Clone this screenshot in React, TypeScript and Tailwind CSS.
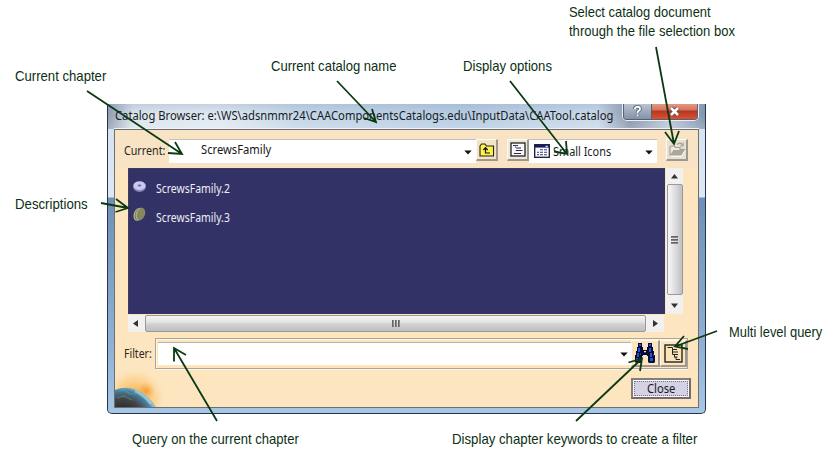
import { useLayoutEffect, useRef, useState } from "react";
import type { ReactNode } from "react";

/* A single line of text squeezed or stretched to an exact width. */
function FitText({ width, className = "", children }: { width: number; className?: string; children: ReactNode }) {
  const ref = useRef<HTMLSpanElement>(null);
  const [scale, setScale] = useState(1);
  useLayoutEffect(() => {
    if (ref.current) setScale(width / ref.current.offsetWidth);
  }, [width]);
  return (
    <span className="flex h-4 shrink-0 items-start overflow-visible" style={{ width }}>
      <span ref={ref} className={"block shrink-0 origin-left whitespace-nowrap " + className} style={{ transform: `scaleX(${scale})` }}>
        {children}
      </span>
    </span>
  );
}

const ui = "text-[12px] leading-4 [font-family:'Noto_Sans','Open_Sans',sans-serif]";

function Label({ place, width, children }: { place: string; width: number; children: string }) {
  return (
    <div className={"absolute " + place}>
      <FitText width={width} className="text-[14.3px] leading-4 text-[#0b3013] [font-family:'Liberation_Sans',Arial,sans-serif]">
        {children}
      </FitText>
    </div>
  );
}

function Down({ className = "" }: { className?: string }) {
  return (
    <svg className={"shrink-0 " + className} width="8" height="5" viewBox="0 0 8 5">
      <path d="M0.3 0.5H7.7L4 4.6Z" fill="#111" />
    </svg>
  );
}

const raised = "flex shrink-0 items-center justify-center border-t border-l border-r-2 border-b-2 border-t-[#fffaf0] border-l-[#fffaf0] border-r-[#9f9890] border-b-[#9f9890]";

function FolderUp() {
  return (
    <svg width="16" height="14" viewBox="0 0 16 14" className="shrink-0">
      <path d="M1 3 2.5 1H6L7.5 3H14.5V13H1Z" fill="#fdf250" stroke="#25230c" strokeWidth="1.1" />
      <path d="M6.5 5V10H11M4.3 7 6.5 4.7 8.7 7" fill="none" stroke="#111" strokeWidth="1.2" />
    </svg>
  );
}

function TreeList() {
  return (
    <svg width="16" height="15" viewBox="0 0 16 15" className="shrink-0">
      <rect x="1" y="1" width="14" height="13" fill="#faf8fa" stroke="#222" strokeWidth="1.3" />
      <path d="M3 3.5H8M6 6H11M6 8.5H12.5M4 11.5H11" stroke="#292950" strokeWidth="1.1" />
      <path d="M5.5 3.5V6M5.5 8.5V8" stroke="#777" strokeWidth="0.8" />
    </svg>
  );
}

function SmallIcons() {
  return (
    <svg width="16" height="14" viewBox="0 0 16 14" className="shrink-0">
      <rect x="0.7" y="0.7" width="14.6" height="12.6" fill="#fff" stroke="#171932" strokeWidth="1.3" />
      <rect x="1" y="1" width="14" height="2.6" fill="#171a68" />
      <path d="M6 5.7H9M10 5.7H13M3 8.2H5M6 8.2H9M10 8.2H13M3 10.7H5M6 10.7H9M10 10.7H13" stroke="#333789" strokeWidth="1.1" />
      <path d="M11.5 2.3h2.5" stroke="#fff" strokeWidth="1" />
    </svg>
  );
}

function OpenFolder() {
  return (
    <svg width="18" height="17" viewBox="0 0 18 17" className="shrink-0">
      <path d="M2 14V6L3 5H6L7.5 6.5H12V8.5H16.5L13 14Z" fill="#eee9de" stroke="#a5a096" strokeWidth="1.2" />
      <path d="M2 14 5.5 9H16.5L13 14Z" fill="#aca79d" />
      <path d="M9 3.5Q12 0.5 14.5 4M15 1.5V5H12" fill="none" stroke="#a5a096" strokeWidth="1.2" />
      <path d="M3 15.3H13.5L17 9.5" fill="none" stroke="#fffdf5" strokeWidth="1" />
    </svg>
  );
}

function Binoculars() {
  return (
    <svg width="20" height="21" viewBox="0 0 20 21" className="shrink-0">
      <path d="M3 0H7V4H8V7H12V4H13V0H17V4H18V8H19V12H20V19L19 20H14L13 19V13H12V12H8V13H7V19L6 20H1L0 19V12H1V8H2V4H3Z" fill="#080d30" />
      <path d="M4 1H6V3H4ZM3 5H5V9H3ZM2 10H4V14H2ZM1 15H3V18H1ZM14 1H16V3H14ZM14 5H16V9H14ZM15 10H17V14H15ZM15 15H18V18H15Z" fill="#1c55df" />
      <path d="M9 8H11V10H9ZM5 10H6V12H5ZM4 15H5V18H4ZM18 11H19V13H18Z" fill="#1b45a8" />
      <path d="M9 8H11V9H9Z" fill="#fde5bd" />
    </svg>
  );
}

function MultiLevel() {
  return (
    <svg width="19" height="19" viewBox="0 0 19 19" className="shrink-0">
      <rect x="1" y="1" width="17" height="17" fill="#fbe3ba" stroke="#16150f" strokeWidth="1.3" />
      <path d="M3.5 3.5H8.5V10.5M8.5 5.5H13M8.5 8H14M8.5 10.5H14M10.5 10.5V13.5M10.5 13H13.5M12 13V15.5H16" fill="none" stroke="#28251c" strokeWidth="1" />
    </svg>
  );
}

function Planet() {
  return (
    <svg width="52" height="36" viewBox="0 0 52 36">
      <defs>
        <radialGradient id="halo" gradientUnits="userSpaceOnUse" cx="20" cy="28" r="31">
          <stop offset="0.3" stopColor="#fbb755" stopOpacity="0.9" />
          <stop offset="0.7" stopColor="#fcd08a" stopOpacity="0.6" />
          <stop offset="1" stopColor="#fde5bd" stopOpacity="0" />
        </radialGradient>
        <radialGradient id="flare" gradientUnits="userSpaceOnUse" cx="31" cy="20" r="9">
          <stop offset="0" stopColor="#f59a3d" />
          <stop offset="1" stopColor="#f9ad4d" stopOpacity="0" />
        </radialGradient>
        <radialGradient id="globe" gradientUnits="userSpaceOnUse" cx="7" cy="50" r="37">
          <stop offset="0.3" stopColor="#292623" />
          <stop offset="0.6" stopColor="#424548" />
          <stop offset="0.83" stopColor="#4681a0" />
          <stop offset="0.94" stopColor="#86c3d3" />
          <stop offset="1" stopColor="#b8bd9b" />
        </radialGradient>
      </defs>
      <rect width="52" height="36" fill="url(#halo)" />
      <rect x="20" y="8" width="24" height="24" fill="url(#flare)" />
      <path d="M0 19C14 13 31 20 41 36H0Z" fill="url(#globe)" />
      <path d="M20 20Q29 24 36 33" fill="none" stroke="#d4e3e4" strokeWidth="2.5" opacity="0.45" />
      <path d="M3 20 9 19 15 23 21 23M2 27 9 25 17 29" fill="none" stroke="#91bdc9" strokeWidth="1.2" opacity="0.3" />
    </svg>
  );
}

function ListItem({ name, width, children }: { name: string; width: number; children: ReactNode }) {
  return (
    <div className="flex h-[29px] items-center pl-1">
      <div className="flex w-[23px] shrink-0 items-start">{children}</div>
      <FitText width={width} className={ui + " text-[#eeeef6]"}>{name}</FitText>
    </div>
  );
}

function Dialog() {
  return (
    <div className="flex h-[310px] w-[599px] shrink-0 flex-col overflow-hidden rounded-b-[5px] border-b border-l border-r border-[#26354d] bg-[linear-gradient(180deg,#cbd9e8_0,#d5e2ef_10px,#dde8f3_93px,#6e8fb8_94px,#91b2d5_245px,#a8c7e6_100%)] px-[6px]">
      <div className="-mx-[6px] flex h-[25px] shrink-0 items-start justify-between bg-[linear-gradient(180deg,#8fa5c055_0,#8fa5c000_10px,#ffffff33_100%),linear-gradient(90deg,#8e9bb0_0,#dae3ec_25px,#e0e9f1_110px,#c3d5e7_190px,#b5cbe2_360px,#c8d8e9_490px,#8594a9_522px,#b9c6d7_560px,#8094ad_100%)] pl-[7px] pr-[7px]">
        <div className="pt-[4px]">
          <FitText width={498} className={ui + " text-[#171b22]"}>
            Catalog Browser: e:\WS\adsnmmr24\CAAComponentsCatalogs.edu\InputData\CAATool.catalog
          </FitText>
        </div>
        <div className="flex h-4 w-[75px] shrink-0 overflow-hidden rounded-b-[4px] border border-t-0 border-[#59616e] shadow-[0_0_0_1px_#e8eef5]">
          <div className="flex w-7 items-center justify-center border-r border-[#5e5c65] bg-linear-to-b from-[#b9c4d2] to-[#8592a8]">
            <svg width="11" height="13" viewBox="0 0 11 13">
              <path d="M3 4Q3 1.8 5.5 1.8Q8 1.8 8 4Q8 5.4 6.3 6.1Q5.5 6.5 5.5 8M5.5 9.5V11" fill="none" stroke="#53617a" strokeWidth="3.6" />
              <path d="M3 4Q3 1.8 5.5 1.8Q8 1.8 8 4Q8 5.4 6.3 6.1Q5.5 6.5 5.5 8M5.5 9.5V11" fill="none" stroke="#fff" strokeWidth="1.9" />
            </svg>
          </div>
          <div className="flex flex-1 items-center justify-center bg-[linear-gradient(180deg,#e39983_0,#d4735d_6px,#b7361f_7px,#d95232_100%)]">
            <svg width="13" height="11" viewBox="0 0 13 11">
              <path d="M3 2 10 9M10 2 3 9" stroke="#6f4547" strokeWidth="4.3" />
              <path d="M3 2 10 9M10 2 3 9" stroke="#fff" strokeWidth="2.5" />
            </svg>
          </div>
        </div>
      </div>

      <div className="flex h-[279px] w-[585px] shrink-0 flex-col border border-[#6d6e70] bg-[#fce5bf] shadow-[0_-1px_0_#edf3f9]">
        <div className="flex h-[38px] shrink-0 items-start bg-[#f8e3c4] pl-[9px] pt-[9px]">
          <div className="w-[45px] pt-[4px]">
            <FitText width={41} className={ui + " text-[#292724]"}>Current:</FitText>
          </div>
          <div className="flex h-[24px] w-[307px] items-start border-t border-[#c8c0b8] bg-white pl-[32px] pr-1 pt-[2px]">
            <FitText width={70} className={ui + " text-[#171717]"}>ScrewsFamily</FitText>
            <Down className="ml-auto mt-[8px]" />
          </div>
          <div className={raised + " h-[22px] w-[22px] bg-[#f2e5c7]"}><FolderUp /></div>
          <div className={raised + " ml-[9px] h-[22px] w-[22px] bg-[#eee8dc]"}><TreeList /></div>
          <div className="flex h-[24px] w-[128px] items-start border-t border-[#c8c0b8] bg-white pl-[5px] pr-1 pt-[4px]">
            <SmallIcons />
            <div className="ml-[3px]"><FitText width={58} className={ui + " text-[#1d1d1d]"}>Small Icons</FitText></div>
            <Down className="ml-auto mt-[6px]" />
          </div>
          <div className={raised + " ml-[9px] h-[22px] w-[22px] bg-[#e8e1d1]"}><OpenFolder /></div>
        </div>

        <div className="ml-[13px] flex h-[146px] shrink-0">
          <div className="h-full w-[537px] border-t border-l border-[#3e3d60] bg-[#333266] pt-[5px]">
            <ListItem name="ScrewsFamily.2" width={74}>
              <svg width="14" height="13" viewBox="0 0 14 13" className="-mt-[5px]">
                <ellipse cx="6.5" cy="7.2" rx="6.2" ry="4.7" fill="#8989bd" />
                <ellipse cx="6.5" cy="5.6" rx="6.2" ry="4.3" fill="#c8c8f0" />
                <ellipse cx="6.5" cy="5.5" rx="1.7" ry="1.1" fill="#686890" />
              </svg>
            </ListItem>
            <ListItem name="ScrewsFamily.3" width={74}>
              <svg width="14" height="16" viewBox="0 0 14 16" className="-mt-[7px]">
                <ellipse cx="5" cy="8.4" rx="4.2" ry="6.6" transform="rotate(18 5 8.4)" fill="#b7ba90" />
                <ellipse cx="6.2" cy="8.2" rx="4.2" ry="6.6" transform="rotate(18 6.2 8.2)" fill="#6b6e4c" />
                <ellipse cx="6.9" cy="8.1" rx="4.1" ry="6.5" transform="rotate(18 6.9 8.1)" fill="#b2b589" />
                <ellipse cx="8" cy="8" rx="4" ry="6.3" transform="rotate(18 8 8)" fill="#85885f" />
              </svg>
            </ListItem>
          </div>
          <div className="ml-px flex h-full w-[17px] flex-col items-center bg-[#f2f1ef]">
            <svg width="7" height="5" viewBox="0 0 7 5" className="mt-[6px]"><path d="M0 4.5 3.5 0 7 4.5Z" fill="#333" /></svg>
            <div className="mt-[5px] flex h-[111px] w-[16px] flex-col items-center justify-center gap-[1px] rounded-[2px] border border-[#999] bg-linear-to-r from-[#f7f7f7] via-[#dedee0] to-[#bfc0c4]">
              <div className="h-[2px] w-[7px] bg-linear-to-b from-[#555] to-[#999]" />
              <div className="h-[2px] w-[7px] bg-linear-to-b from-[#555] to-[#999]" />
              <div className="h-[2px] w-[7px] bg-linear-to-b from-[#555] to-[#999]" />
            </div>
            <svg width="7" height="5" viewBox="0 0 7 5" className="mt-[8px]"><path d="M0 0.5H7L3.5 5Z" fill="#333" /></svg>
          </div>
        </div>

        <div className="ml-[13px] mt-px flex h-[17px] w-[536px] shrink-0 items-center bg-[#f2f1ef]">
          <svg width="5" height="7" viewBox="0 0 5 7" className="ml-[5px]"><path d="M5 0V7L0 3.5Z" fill="#333" /></svg>
          <div className="ml-[7px] flex h-[17px] w-[501px] items-center justify-center gap-[1px] rounded-[2px] border border-[#9a9a9a] bg-[linear-gradient(180deg,#f4f4f4_0,#e4e4e5_40%,#d0d0d2_55%,#bebfc2_100%)]">
            <div className="h-[7px] w-[2px] bg-linear-to-r from-[#555] to-[#999]" />
            <div className="h-[7px] w-[2px] bg-linear-to-r from-[#555] to-[#999]" />
            <div className="h-[7px] w-[2px] bg-linear-to-r from-[#555] to-[#999]" />
          </div>
          <svg width="5" height="7" viewBox="0 0 5 7" className="ml-[7px]"><path d="M0 0V7L5 3.5Z" fill="#333" /></svg>
        </div>

        <div className="mt-[6px] flex h-[31px] shrink-0 items-start pl-[9px]">
          <div className="w-[31px] pt-[8px]">
            <FitText width={28} className={ui + " text-[#2b2924]"}>Filter:</FitText>
          </div>
          <div className="flex h-[31px] w-[533px] items-start border border-[#a9a49d] pl-[2px] pt-px shadow-[inset_1px_1px_0_#fff6dc,0_1px_0_#fff6dc]">
            <div className="mt-[2px] flex h-[23px] w-[474px] items-center justify-end border-t border-[#b8b2a9] bg-white pr-[3px]">
              <Down />
            </div>
            <div className={raised + " h-[27px] w-[29px]"}><Binoculars /></div>
            <div className={raised + " h-[27px] w-[27px]"}><MultiLevel /></div>
          </div>
        </div>

        <div className="flex min-h-0 flex-1 items-end justify-between">
          <Planet />
          <div className="mb-[8px] mr-[7px] flex h-[21px] w-[60px] border-2 border-t-[#817e7b] border-l-[#817e7b] border-r-[#706c70] border-b-[#706c70] bg-[#f8f6fc] p-px">
            <div className="flex flex-1 items-center justify-center border border-dotted border-[#777] bg-[#d4d2e4]">
              <FitText width={28} className={ui + " text-[#191923]"}>Close</FitText>
            </div>
          </div>
        </div>
      </div>
    </div>
  );
}

const arrows = [
  "M87 91 182 154M175 142 182 154 168 153",
  "M101 203 128 208M116 199 128 208 115.5 212",
  "M337 81 376 122M372 109 376 122 364 118",
  "M510 81 567 154M566 141 567 154 554 151.5",
  "M656 47 674 144M665 132 674 144 679 131",
  "M717 331 675 346.5M684 336 675 346.5 688 349",
  "M217 421 174 348M186 355 174 348 174 361.5",
  "M576 421 642 358.5M628.5 362.5 642 358.5 640 371",
];

export default function App() {
  return (
    <main className="relative flex h-[464px] w-[833px] overflow-hidden bg-white pl-[107px] pt-[104px]">
      <Dialog />
      <svg className="pointer-events-none absolute inset-0" width="833" height="464" viewBox="0 0 833 464">
        <g fill="none" stroke="#0b3a12" strokeWidth="1.8">
          {arrows.map((d) => <path key={d} d={d} />)}
        </g>
      </svg>
      <Label place="left-[15px] top-[68px]" width={91}>Current chapter</Label>
      <Label place="left-[271px] top-[58px]" width={125}>Current catalog name</Label>
      <Label place="left-[463px] top-[58px]" width={89}>Display options</Label>
      <Label place="left-[569px] top-[4px]" width={142}>Select catalog document</Label>
      <Label place="left-[569px] top-[23px]" width={166}>through the file selection box</Label>
      <Label place="left-[15px] top-[196px]" width={73}>Descriptions</Label>
      <Label place="left-[729px] top-[324px]" width={93}>Multi level query</Label>
      <Label place="left-[132px] top-[431px]" width={167}>Query on the current chapter</Label>
      <Label place="left-[452px] top-[431px]" width={245}>Display chapter keywords to create a filter</Label>
    </main>
  );
}
